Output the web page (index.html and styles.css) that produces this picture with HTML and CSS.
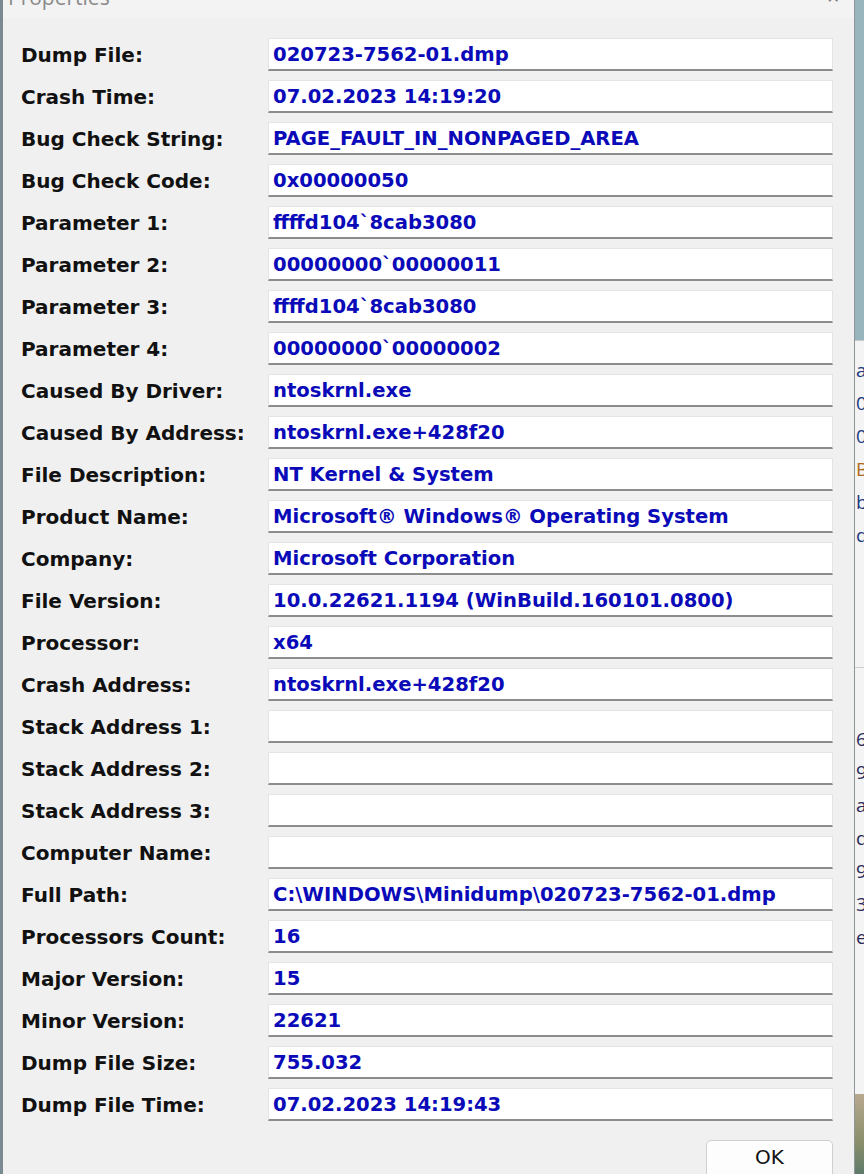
FILE: index.html
```html
<!DOCTYPE html>
<html lang="en">
<head>
    <meta charset="UTF-8">
    <title>Properties</title>
    <link rel="stylesheet" href="styles.css">
</head>
<body>
    <div class="screen">
        <div class="dialog">
            <div class="titlebar">
                <span class="title">Properties</span>
                <span class="close">&#10005;</span>
            </div>

            <div class="props">
                <div class="label">Dump File:</div><div class="field">020723-7562-01.dmp</div>
                <div class="label">Crash Time:</div><div class="field">07.02.2023 14:19:20</div>
                <div class="label">Bug Check String:</div><div class="field">PAGE_FAULT_IN_NONPAGED_AREA</div>
                <div class="label">Bug Check Code:</div><div class="field">0x00000050</div>
                <div class="label">Parameter 1:</div><div class="field">ffffd104`8cab3080</div>
                <div class="label">Parameter 2:</div><div class="field">00000000`00000011</div>
                <div class="label">Parameter 3:</div><div class="field">ffffd104`8cab3080</div>
                <div class="label">Parameter 4:</div><div class="field">00000000`00000002</div>
                <div class="label">Caused By Driver:</div><div class="field">ntoskrnl.exe</div>
                <div class="label">Caused By Address:</div><div class="field">ntoskrnl.exe+428f20</div>
                <div class="label">File Description:</div><div class="field">NT Kernel &amp; System</div>
                <div class="label">Product Name:</div><div class="field">Microsoft® Windows® Operating System</div>
                <div class="label">Company:</div><div class="field">Microsoft Corporation</div>
                <div class="label">File Version:</div><div class="field">10.0.22621.1194 (WinBuild.160101.0800)</div>
                <div class="label">Processor:</div><div class="field">x64</div>
                <div class="label">Crash Address:</div><div class="field">ntoskrnl.exe+428f20</div>
                <div class="label">Stack Address 1:</div><div class="field"></div>
                <div class="label">Stack Address 2:</div><div class="field"></div>
                <div class="label">Stack Address 3:</div><div class="field"></div>
                <div class="label">Computer Name:</div><div class="field"></div>
                <div class="label">Full Path:</div><div class="field">C:\WINDOWS\Minidump\020723-7562-01.dmp</div>
                <div class="label">Processors Count:</div><div class="field">16</div>
                <div class="label">Major Version:</div><div class="field">15</div>
                <div class="label">Minor Version:</div><div class="field">22621</div>
                <div class="label">Dump File Size:</div><div class="field">755.032</div>
                <div class="label">Dump File Time:</div><div class="field">07.02.2023 14:19:43</div>
            </div>

            <div class="buttons">
                <button class="btn">OK</button>
            </div>
        </div>

        <!-- window behind the dialog, only a sliver shows -->
        <div class="behind">
            <div class="behind-top"></div>
            <div class="behind-list">
                <span>a</span><span>0</span><span>0</span><span class="orange">B</span><span>b</span><span>d</span>
            </div>
            <div class="behind-list second">
                <span>6</span><span>9</span><span>a</span><span>d</span><span>9</span><span>3</span><span>e</span>
            </div>
            <div class="behind-photo"></div>
        </div>
    </div>
</body>
</html>
```

FILE: styles.css
```css
body {
    margin: 0;
    padding: 0;
    background-color: #f0f0f0;
    font-family: "DejaVu Sans", Verdana, sans-serif;
    overflow: hidden;
}
.screen {
    display: flex;
    width: 864px;
    height: 1174px;
    overflow: hidden;
}
.dialog {
    width: 855px;
    flex: none;
    box-sizing: border-box;
    border-left: 3px solid #7b8a90;
    border-right: 1px solid #8e9598;
    background-color: #f0f0f0;
}
.titlebar {
    height: 18px;
    background-color: #f3f3f3;
    display: flex;
    justify-content: space-between;
    overflow: hidden;
}
.title {
    font-family: "Open Sans", sans-serif;
    font-size: 21px;
    color: #8a8a8a;
    margin-top: -17px;
    margin-left: 5px;
}
.close {
    font-size: 16px;
    color: #777;
    margin-top: -12px;
    margin-right: 14px;
}
.props {
    display: grid;
    grid-template-columns: 247px 1fr;
    grid-auto-rows: 33px;
    row-gap: 9px;
    padding: 20px 21px 0 18px;
    align-items: center;
}
.label {
    font-weight: bold;
    font-size: 20px;
    color: #111;
}
.field {
    height: 33px;
    box-sizing: border-box;
    background-color: #fff;
    border: 1px solid #e4e4e4;
    border-bottom: 2px solid #8c8c8c;
    padding-left: 4px;
    font-weight: bold;
    font-size: 19.6px;
    line-height: 32px;
    color: #0a0ab8;
    white-space: nowrap;
    overflow: hidden;
}
.buttons {
    display: flex;
    justify-content: flex-end;
    padding: 19px 21px 0 0;
}
.btn {
    width: 127px;
    height: 40px;
    background-color: #fdfdfd;
    border: 1px solid #cfcfcf;
    border-radius: 5px;
    font-family: "DejaVu Sans", sans-serif;
    font-size: 20px;
    color: #111;
    padding: 0 0 6px 0;
}
.behind {
    flex: 1;
    display: flex;
    flex-direction: column;
    overflow: hidden;
    background-color: #f4f4f4;
}
.behind-top {
    height: 340px;
    background-color: #98b4bd;
    border-bottom: 1px solid #c9c9c9;
    flex: none;
}
.behind-list {
    display: flex;
    flex-direction: column;
    padding-top: 13px;
    font-family: "Open Sans", sans-serif;
    font-size: 19px;
    color: #1a3a80;
}
.behind-list span {
    height: 33px;
    line-height: 33px;
    margin-left: 1px;
}
.behind-list .orange {
    color: #b06a20;
}
.behind-list.second {
    margin-top: 115px;
    border-top: 1px solid #d0d0d0;
    padding-top: 55px;
    color: #2a2a5a;
}
.behind-photo {
    margin-top: auto;
    height: 80px;
    background: linear-gradient(180deg, #b8a890, #8a8f6a 60%, #5e7a6a);
}
```
